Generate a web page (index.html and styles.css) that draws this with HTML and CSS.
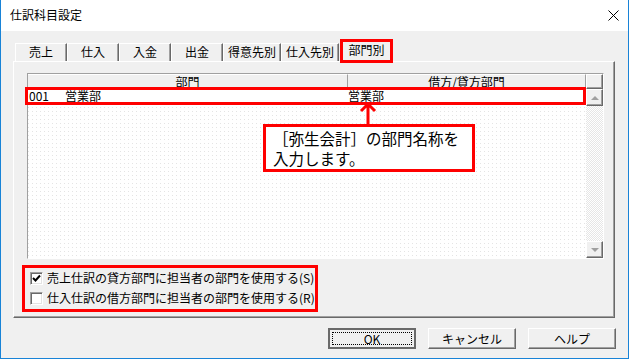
FILE: index.html
```html
<!DOCTYPE html>
<html lang="ja">
<head>
  <meta charset="UTF-8">
  <title>仕訳科目設定</title>
  <link rel="stylesheet" href="styles.css">
</head>
<body>
  <div class="dialog">
    <div class="titlebar">
      <span class="title">仕訳科目設定</span>
      <svg class="close" width="11" height="11" viewBox="0 0 11 11">
        <path d="M0.5 0.5L10.5 10.5M10.5 0.5L0.5 10.5" stroke="#000" stroke-width="1" fill="none"/>
      </svg>
    </div>

    <div class="content">
      <div class="tabs">
        <div class="tab">売上</div>
        <div class="tab">仕入</div>
        <div class="tab">入金</div>
        <div class="tab">出金</div>
        <div class="tab wide">得意先別</div>
        <div class="tab wide">仕入先別</div>
        <div class="tab active">部門別</div>
      </div>

      <div class="panel">
        <div class="grid">
          <div class="grid-main">
            <div class="grid-head">
              <div class="hcell col-a">部門</div>
              <div class="hcell col-b">借方/貸方部門</div>
            </div>
            <div class="grid-row marked">
              <div class="cell col-a"><span class="code">001</span>営業部</div>
              <div class="cell col-b">営業部</div>
            </div>
            <div class="grid-empty"></div>
          </div>
          <div class="vscroll">
            <div class="sb-corner"></div>
            <div class="sb-btn"><span class="tri up"></span></div>
            <div class="sb-track"></div>
            <div class="sb-btn"><span class="tri down"></span></div>
          </div>
        </div>

        <div class="options">
          <label class="opt">
            <span class="check">
              <svg width="9" height="9" viewBox="0 0 9 9"><path d="M1 4L3.5 6.5L8 1.5" stroke="#000" stroke-width="2" fill="none"/></svg>
            </span>
            売上仕訳の貸方部門に担当者の部門を使用する(S)
          </label>
          <label class="opt">
            <span class="check"></span>
            仕入仕訳の借方部門に担当者の部門を使用する(R)
          </label>
        </div>
      </div>

      <div class="buttons">
        <button class="btn default"><span class="focus">OK</span></button>
        <button class="btn">キャンセル</button>
        <button class="btn">ヘルプ</button>
      </div>
    </div>

    <svg class="arrow" width="18" height="24" viewBox="0 0 18 24">
      <path d="M9 24V4M2 10L9 3L16 10" stroke="#f00" stroke-width="3" fill="none"/>
    </svg>
    <div class="callout">［弥生会計］の部門名称を<br>入力します。</div>
  </div>
</body>
</html>
```

FILE: styles.css
```css
* {
  box-sizing: border-box;
}

body {
  margin: 0;
  font-family: "Noto Sans CJK JP", "Noto Sans", sans-serif;
  font-size: 12px;
  color: #000;
}

.dialog {
  position: relative;
  width: 629px;
  height: 359px;
  background: #f0f0f0;
  border: 1px solid #1883d7;
  border-top: none;
  overflow: hidden;
}

.titlebar {
  height: 31px;
  background: #fff;
  display: flex;
  align-items: center;
  justify-content: space-between;
  padding: 0 9px 1px 9px;
}

.title {
  font-size: 12px;
  line-height: 16px;
}

.content {
  padding: 9px 12px 0 12px;
}

/* tabs */
.tabs {
  display: flex;
  align-items: flex-end;
  height: 21px;
  padding-left: 2px;
}

.tab {
  width: 52px;
  height: 18px;
  border-top: 1px solid #fff;
  border-left: 1px solid #fff;
  border-right: 1px solid #696969;
  box-shadow: inset -1px 0 #a0a0a0;
  text-align: center;
  line-height: 16px;
}

.tab.wide {
  width: 58px;
}

.tab.active {
  position: relative;
  z-index: 1;
  width: 53px;
  height: 24px;
  margin-left: 1px;
  margin-bottom: -2px;
  border: 3px solid #f00;
  box-shadow: none;
  background: #f0f0f0;
  line-height: 16px;
}

/* panel */
.panel {
  width: 602px;
  height: 257px;
  border: 1px solid;
  border-color: #fff #696969 #696969 #fff;
  box-shadow: inset -1px -1px #a0a0a0;
}

.grid {
  display: flex;
  width: 577px;
  height: 186px;
  margin: 11px 0 0 13px;
  border: 1px solid;
  border-color: #a0a0a0 #fff #fff #a0a0a0;
}

.grid-main {
  flex: 1;
  display: flex;
  flex-direction: column;
}

.grid-head {
  display: flex;
  height: 13px;
  background: #f0f0f0;
}

.hcell {
  text-align: center;
  line-height: 14px;
  border-right: 1px solid #a0a0a0;
  border-top: 1px solid #fff;
}

.col-a {
  width: 320px;
}

.col-b {
  flex: 1;
}

.grid-row {
  position: relative;
  display: flex;
  height: 16px;
  margin-top: 1px;
  background: #fff;
  line-height: 16px;
}

.grid-row.marked::after {
  content: "";
  position: absolute;
  left: -3px;
  right: 0;
  top: -1px;
  bottom: -1px;
  border: 3px solid #f00;
}

.cell.col-a {
  padding-left: 1px;
}

.code {
  display: inline-block;
  width: 36px;
}

.grid-empty {
  flex: 1;
  background-color: #fff;
  background-image: linear-gradient(#fff 3px, transparent 3px), linear-gradient(90deg, #e4e4e4 1px, #fff 1px);
  background-size: 4px 4px;
}

.vscroll {
  width: 17px;
  display: flex;
  flex-direction: column;
  background: #fff;
}

.sb-corner,
.sb-btn {
  background: #f0f0f0;
  border: 1px solid;
  border-color: #fff #696969 #696969 #fff;
  box-shadow: inset -1px -1px #a0a0a0;
}

.sb-corner {
  height: 15px;
}

.sb-btn {
  height: 17px;
  display: flex;
  align-items: center;
  justify-content: center;
}

.sb-track {
  flex: 1;
  background: repeating-conic-gradient(#e6e6e6 0 25%, #fff 0 50%);
  background-size: 2px 2px;
}

.tri {
  width: 0;
  height: 0;
  border-left: 4px solid transparent;
  border-right: 4px solid transparent;
}

.tri.up {
  border-bottom: 4px solid #a0a0a0;
}

.tri.down {
  border-top: 4px solid #a0a0a0;
}

/* check options */
.options {
  width: 296px;
  height: 47px;
  margin: 6px 0 0 8px;
  border: 3px solid #f00;
  padding: 0 0 0 5px;
}

.opt {
  display: flex;
  align-items: center;
  gap: 4px;
  height: 20px;
  line-height: 16px;
}

.check {
  width: 13px;
  height: 13px;
  border: 1px solid;
  border-color: #a0a0a0 #fff #fff #a0a0a0;
  box-shadow: inset 1px 1px #696969, inset -1px -1px #e3e3e3;
  background: #fff;
  display: flex;
  align-items: center;
  justify-content: center;
}

/* buttons */
.buttons {
  display: flex;
  justify-content: flex-end;
  gap: 12px;
  margin-top: 10px;
}

.btn {
  width: 88px;
  height: 21px;
  padding: 0;
  font-family: inherit;
  font-size: 12px;
  line-height: 16px;
  color: #000;
  background: #f0f0f0;
  border: 1px solid;
  border-color: #fff #696969 #696969 #fff;
  box-shadow: inset -1px -1px #a0a0a0;
}

.btn.default {
  border: 2px solid #6a6a6a;
  box-shadow: none;
  position: relative;
}

.btn.default::before {
  content: "";
  position: absolute;
  inset: 2px;
  border: 1px dotted #000;
}

/* annotation */
.arrow {
  position: absolute;
  left: 358px;
  top: 101px;
}

.callout {
  position: absolute;
  left: 262px;
  top: 124px;
  width: 212px;
  height: 48px;
  background: #fff;
  border: 3px solid #f00;
  padding: 1px 0 0 7px;
  font-size: 15.5px;
  line-height: 20px;
}
```
